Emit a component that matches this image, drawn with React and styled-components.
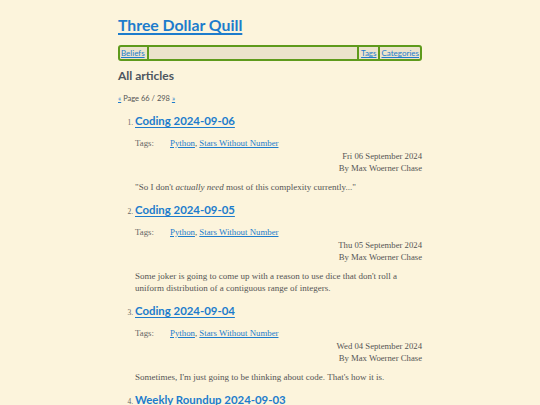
import React from 'react'
import styled, { createGlobalStyle } from 'styled-components'

const GlobalStyle = createGlobalStyle`
  html, body {
    margin: 0;
    padding: 0;
    background: #fcf4dc;
  }
  body {
    font-family: "Liberation Serif", serif;
    color: #555;
  }
`

const sans = `"Lato", "Open Sans", sans-serif`
const serif = `"Liberation Serif", "DejaVu Serif", serif`
const linkBlue = '#1d7ccc'

const Page = styled.div`
  width: 304px;
  margin: 0 auto;
  padding-top: 14px;
`

const SiteTitle = styled.h1`
  margin: 0;
  font-family: ${sans};
  font-size: 15.8px;
  line-height: 22px;
  font-weight: 700;
  a {
    color: ${linkBlue};
    text-decoration: underline;
    text-decoration-thickness: 1.5px;
    text-underline-offset: 2px;
  }
`

const Nav = styled.nav`
  margin-top: 9px;
  display: flex;
  align-items: stretch;
  height: 12px;
  border: 2px solid #5e9a1c;
  border-radius: 3px;
  background: #ebe3cc;
  font-family: ${sans};
  font-size: 8px;
  line-height: 12px;
`

const NavItem = styled.a`
  padding: 0 1px 0 1px;
  color: ${linkBlue};
  text-decoration: underline;
  border-left: ${p => (p.$sep ? '2px solid #5e9a1c' : 'none')};
  padding-left: ${p => (p.$sep ? '2px' : '1px')};
`

const NavSpacer = styled.div`
  flex: 1;
  border-left: 2px solid #5e9a1c;
  margin-left: 1px;
`

const Heading = styled.h2`
  margin: 7px 0 0;
  font-family: ${sans};
  font-size: 12px;
  line-height: 16px;
  font-weight: 700;
  color: #4d5660;
`

const Pager = styled.p`
  margin: 9px 0 0;
  font-family: ${sans};
  font-size: 7.5px;
  line-height: 12px;
  color: #555;
  a {
    color: ${linkBlue};
  }
`

const Articles = styled.ol`
  margin: 8px 0 0;
  padding-left: 17px;
  li::marker {
    font-family: ${serif};
    font-size: 7.5px;
    color: #666;
  }
`

const Article = styled.li`
  & + & {
    margin-top: 9px;
  }
`

const ArticleTitle = styled.h3`
  margin: 0;
  font-family: ${sans};
  font-size: 11.4px;
  line-height: 16px;
  font-weight: 700;
  a {
    color: ${linkBlue};
    text-decoration-thickness: 1px;
    text-underline-offset: 1.5px;
  }
`

const TagRow = styled.div`
  margin-top: 8px;
  display: flex;
  font-family: ${serif};
  font-size: 8.8px;
  line-height: 13px;
`

const TagLabel = styled.span`
  width: 35px;
  color: #666;
`

const TagLink = styled.a`
  color: ${linkBlue};
`

const Meta = styled.div`
  text-align: right;
  font-family: ${serif};
  font-size: 8.7px;
  line-height: 12px;
  color: #555;
`

const Summary = styled.p`
  margin: 7px 0 0;
  padding-right: 6px;
  font-family: ${serif};
  font-size: 9px;
  line-height: 12px;
  color: #555;
`

const articles = [
  {
    title: 'Coding 2024-09-06',
    date: 'Fri 06 September 2024',
    summary: (
      <>
        "So I don't <em>actually need</em> most of this complexity currently..."
      </>
    ),
  },
  {
    title: 'Coding 2024-09-05',
    date: 'Thu 05 September 2024',
    summary:
      "Some joker is going to come up with a reason to use dice that don't roll a uniform distribution of a contiguous range of integers.",
  },
  {
    title: 'Coding 2024-09-04',
    date: 'Wed 04 September 2024',
    summary: "Sometimes, I'm just going to be thinking about code. That's how it is.",
  },
  {
    title: 'Weekly Roundup 2024-09-03',
    date: 'Tue 03 September 2024',
    summary: '',
  },
]

export default function App() {
  return (
    <>
      <GlobalStyle />
      <Page>
        <SiteTitle>
          <a href="#">Three Dollar Quill</a>
        </SiteTitle>
        <Nav>
          <NavItem href="#">Beliefs</NavItem>
          <NavSpacer />
          <NavItem href="#" $sep>Tags</NavItem>
          <NavItem href="#" $sep>Categories</NavItem>
        </Nav>
        <Heading>All articles</Heading>
        <Pager>
          <a href="#">«</a> Page 66 / 298 <a href="#">»</a>
        </Pager>
        <Articles>
          {articles.map(a => (
            <Article key={a.title}>
              <ArticleTitle>
                <a href="#">{a.title}</a>
              </ArticleTitle>
              <TagRow>
                <TagLabel>Tags:</TagLabel>
                <span>
                  <TagLink href="#">Python</TagLink>, <TagLink href="#">Stars Without Number</TagLink>
                </span>
              </TagRow>
              <Meta>
                {a.date}
                <br />
                By Max Woerner Chase
              </Meta>
              <Summary>{a.summary}</Summary>
            </Article>
          ))}
        </Articles>
      </Page>
    </>
  )
}
